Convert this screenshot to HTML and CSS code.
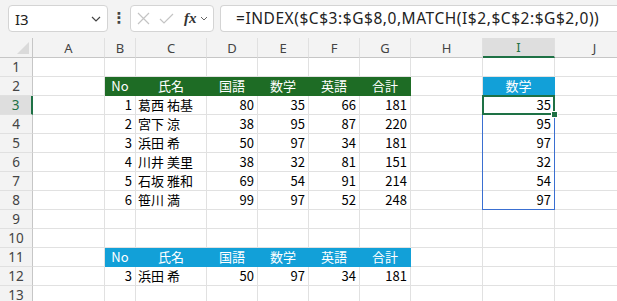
FILE: index.html
```html
<!DOCTYPE html>
<html lang="ja">
<head>
<meta charset="utf-8">
<title>Excel</title>
<link rel="stylesheet" href="styles.css">
</head>
<body>
<div class="topbar">
  <div class="namebox">
    <span class="nb-text">I3</span>
    <svg class="chev" width="10" height="6" viewBox="0 0 10 6"><path d="M1 1 L5 5 L9 1" fill="none" stroke="#444" stroke-width="1.2"/></svg>
  </div>
  <div class="dots">⋮</div>
  <div class="fxbox">
    <svg class="ico" width="13" height="13" viewBox="0 0 13 13"><path d="M1 1 L12 12 M12 1 L1 12" stroke="#c4c4c4" stroke-width="1.2" fill="none"/></svg>
    <svg class="ico" width="15" height="13" viewBox="0 0 15 13"><path d="M1 7 L5 11 L14 2" stroke="#c4c4c4" stroke-width="1.2" fill="none"/></svg>
    <span class="fx">fx</span>
    <svg class="chev small" width="8" height="5" viewBox="0 0 8 5"><path d="M1 1 L4 4 L7 1" fill="none" stroke="#666" stroke-width="1"/></svg>
  </div>
  <div class="formula">=INDEX($C$3:$G$8,0,MATCH(I$2,$C$2:$G$2,0))</div>
</div>

<div class="sheet">
  <div class="ch corner"><span class="tri"></span></div>
  <div class="ch">A</div><div class="ch">B</div><div class="ch">C</div><div class="ch">D</div><div class="ch">E</div><div class="ch">F</div><div class="ch">G</div><div class="ch">H</div><div class="ch sel">I</div><div class="ch">J</div>

  <div class="rh">1</div><div class="c"></div><div class="c"></div><div class="c"></div><div class="c"></div><div class="c"></div><div class="c"></div><div class="c"></div><div class="c"></div><div class="c"></div><div class="c"></div>

  <div class="rh">2</div><div class="c"></div><div class="c gh">No</div><div class="c gh">氏名</div><div class="c gh">国語</div><div class="c gh">数学</div><div class="c gh">英語</div><div class="c gh">合計</div><div class="c"></div><div class="c bh">数学</div><div class="c"></div>

  <div class="rh sel">3</div><div class="c"></div><div class="c n">1</div><div class="c t">葛西 祐基</div><div class="c n">80</div><div class="c n">35</div><div class="c n">66</div><div class="c n">181</div><div class="c"></div><div class="c n">35</div><div class="c"></div>

  <div class="rh">4</div><div class="c"></div><div class="c n">2</div><div class="c t">宮下 涼</div><div class="c n">38</div><div class="c n">95</div><div class="c n">87</div><div class="c n">220</div><div class="c"></div><div class="c n">95</div><div class="c"></div>

  <div class="rh">5</div><div class="c"></div><div class="c n">3</div><div class="c t">浜田 希</div><div class="c n">50</div><div class="c n">97</div><div class="c n">34</div><div class="c n">181</div><div class="c"></div><div class="c n">97</div><div class="c"></div>

  <div class="rh">6</div><div class="c"></div><div class="c n">4</div><div class="c t">川井 美里</div><div class="c n">38</div><div class="c n">32</div><div class="c n">81</div><div class="c n">151</div><div class="c"></div><div class="c n">32</div><div class="c"></div>

  <div class="rh">7</div><div class="c"></div><div class="c n">5</div><div class="c t">石坂 雅和</div><div class="c n">69</div><div class="c n">54</div><div class="c n">91</div><div class="c n">214</div><div class="c"></div><div class="c n">54</div><div class="c"></div>

  <div class="rh">8</div><div class="c"></div><div class="c n">6</div><div class="c t">笹川 満</div><div class="c n">99</div><div class="c n">97</div><div class="c n">52</div><div class="c n">248</div><div class="c"></div><div class="c n">97</div><div class="c"></div>

  <div class="rh">9</div><div class="c"></div><div class="c"></div><div class="c"></div><div class="c"></div><div class="c"></div><div class="c"></div><div class="c"></div><div class="c"></div><div class="c"></div><div class="c"></div>

  <div class="rh">10</div><div class="c"></div><div class="c"></div><div class="c"></div><div class="c"></div><div class="c"></div><div class="c"></div><div class="c"></div><div class="c"></div><div class="c"></div><div class="c"></div>

  <div class="rh">11</div><div class="c"></div><div class="c bh">No</div><div class="c bh">氏名</div><div class="c bh">国語</div><div class="c bh">数学</div><div class="c bh">英語</div><div class="c bh">合計</div><div class="c"></div><div class="c"></div><div class="c"></div>

  <div class="rh">12</div><div class="c"></div><div class="c n">3</div><div class="c t">浜田 希</div><div class="c n">50</div><div class="c n">97</div><div class="c n">34</div><div class="c n">181</div><div class="c"></div><div class="c"></div><div class="c"></div>

  <div class="rh">13</div><div class="c"></div><div class="c"></div><div class="c"></div><div class="c"></div><div class="c"></div><div class="c"></div><div class="c"></div><div class="c"></div><div class="c"></div><div class="c"></div>

  <div class="range"></div>
  <div class="active"><span class="handle"></span></div>
</div>
</body>
</html>
```

FILE: styles.css
```css
* { box-sizing: border-box; }
html, body { margin: 0; padding: 0; }
body {
  width: 617px;
  height: 301px;
  overflow: hidden;
  background: #ffffff;
  font-family: "Noto Sans CJK JP", "Noto Sans", sans-serif;
  color: #000;
}

.topbar {
  height: 38px;
  background: #f3f3f3;
  display: flex;
  align-items: flex-start;
  padding: 5px 0 0 8px;
  overflow: hidden;
}
.namebox {
  width: 100px;
  height: 27px;
  background: #fff;
  border: 1px solid #d4d4d4;
  border-radius: 4px;
  display: flex;
  align-items: center;
  justify-content: space-between;
  padding: 0 6px 0 6px;
  flex-shrink: 0;
}
.nb-text {
  font-family: "Noto Sans", sans-serif;
  font-size: 15px;
  color: #222;
}
.chev { display: block; }
.dots {
  width: 22px;
  flex-shrink: 0;
  text-align: center;
  font-family: "DejaVu Sans", sans-serif;
  font-size: 15px;
  line-height: 27px;
  color: #444;
  font-weight: bold;
}
.fxbox {
  width: 84px;
  height: 27px;
  flex-shrink: 0;
  background: #fff;
  border: 1px solid #d4d4d4;
  border-radius: 4px;
  display: flex;
  align-items: center;
  padding: 0 0 0 6px;
  gap: 9px;
}
.ico { display: block; flex-shrink: 0; }
.fx {
  font-family: "Liberation Serif", serif;
  font-style: italic;
  font-weight: bold;
  font-size: 15px;
  color: #333;
  margin-left: 1px;
}
.chev.small { margin-left: -6px; }
.formula {
  margin-left: 6px;
  flex: 1;
  height: 27px;
  background: #fff;
  border: 1px solid #d4d4d4;
  border-right: none;
  border-radius: 4px 0 0 4px;
  padding-left: 15px;
  font-family: "Noto Sans", sans-serif;
  font-size: 15.5px;
  letter-spacing: 0.55px;
  line-height: 25px;
  color: #222;
  white-space: nowrap;
  overflow: hidden;
}

.sheet {
  position: relative;
  display: grid;
  grid-template-columns: 33px 72px 31px 71px 51px 51px 51px 51px 72px 72px 80px;
  grid-template-rows: 20px repeat(13, 19px);
  font-size: 13px;
}
.ch {
  background: #f3f3f3;
  border-bottom: 1px solid #c6c6c6;
  border-right: 1px solid #e0e0e0;
  display: flex;
  align-items: center;
  justify-content: center;
  font-family: "Noto Sans", sans-serif;
  font-size: 13px;
  color: #444;
}
.ch.corner {
  justify-content: flex-end;
  align-items: flex-end;
  padding: 0 3px 3px 0;
  border-right: 1px solid #c6c6c6;
}
.tri {
  width: 0;
  height: 0;
  border-left: 12px solid transparent;
  border-bottom: 12px solid #dadada;
}
.ch.sel {
  background: #dedede;
  border-bottom: 2px solid #1e7145;
  color: #1e7145;
}
.rh {
  background: #f3f3f3;
  border-right: 1px solid #c6c6c6;
  border-bottom: 1px solid #e0e0e0;
  display: flex;
  align-items: center;
  justify-content: center;
  font-family: "Noto Sans", sans-serif;
  font-size: 13.5px;
  color: #444;
}
.rh.sel {
  background: #dedede;
  border-right: 2px solid #1e7145;
  color: #1e7145;
}
.c {
  border-right: 1px solid #e1e1e1;
  border-bottom: 1px solid #e1e1e1;
  display: flex;
  align-items: center;
  white-space: nowrap;
  overflow: hidden;
  line-height: 18px;
}
.c.n { justify-content: flex-end; padding-right: 3px; }
.c.t { padding-left: 2px; }
.c.gh {
  background: #1e6c25;
  border-color: #1e6c25;
  color: #fff;
  justify-content: center;
}
.c.bh {
  background: #12a0d8;
  border-color: #12a0d8;
  color: #fff;
  justify-content: center;
}

.range {
  position: absolute;
  left: 482px;
  top: 57px;
  width: 73px;
  height: 115px;
  border: 1px solid #3a6fd1;
  pointer-events: none;
}
.active {
  position: absolute;
  left: 482px;
  top: 57px;
  width: 73px;
  height: 20px;
  border: 2px solid #1e7145;
}
.handle {
  position: absolute;
  right: -5px;
  bottom: -5px;
  width: 7px;
  height: 7px;
  background: #1e7145;
  border: 1px solid #fff;
}
```
